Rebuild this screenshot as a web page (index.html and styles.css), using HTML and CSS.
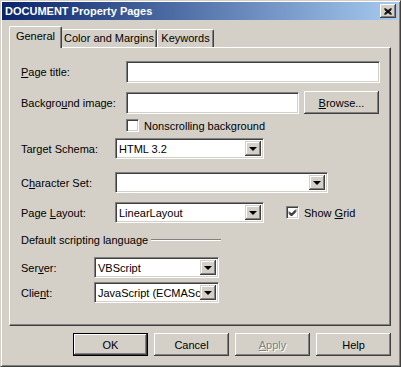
FILE: index.html
```html
<!DOCTYPE html>
<html lang="en">
<head>
    <meta charset="UTF-8">
    <title>DOCUMENT Property Pages</title>
    <link rel="stylesheet" href="styles.css">
</head>
<body>
    <div class="window">
        <!-- Title bar -->
        <div class="titlebar">
            <span class="title">DOCUMENT Property Pages</span>
            <span class="close-btn">
                <svg width="8" height="7" viewBox="0 0 8 7">
                    <path d="M0.5 0.5 L7.5 6.5 M1.5 0.5 L7.5 5.5 M0.5 1.5 L6.5 6.5 M7.5 0.5 L0.5 6.5 M6.5 0.5 L0.5 5.5 M7.5 1.5 L1.5 6.5" stroke="#000" stroke-width="1" fill="none"/>
                </svg>
            </span>
        </div>

        <div class="dialog">
            <div class="tabs">
                <div class="tab active tab-general">General</div>
                <div class="tab tab-color">Color and Margins</div>
                <div class="tab tab-keywords">Keywords</div>
            </div>

            <div class="panel">
                <div class="row row-pagetitle">
                    <label class="lbl lbl-a"><u>P</u>age title:</label>
                    <div class="edit w-title"></div>
                </div>

                <div class="row row-bgimage">
                    <label class="lbl lbl-a">Backgro<u>u</u>nd image:</label>
                    <div class="edit w-bg"></div>
                    <div class="btn btn-browse"><span><u>B</u>rowse...</span></div>
                </div>

                <div class="row row-check">
                    <span class="lbl lbl-a"></span>
                    <span class="checkbox"></span>
                    <span class="check-text">Nonscrolling back<u>g</u>round</span>
                </div>

                <div class="row row-schema">
                    <label class="lbl lbl-b">Tar<u>g</u>et Schema:</label>
                    <div class="select w-schema"><span class="value">HTML 3.2</span><span class="drop"><i></i></span></div>
                </div>

                <div class="row row-charset">
                    <label class="lbl lbl-b">C<u>h</u>aracter Set:</label>
                    <div class="select w-charset"><span class="value"></span><span class="drop"><i></i></span></div>
                </div>

                <div class="row row-layout">
                    <label class="lbl lbl-b">Page <u>L</u>ayout:</label>
                    <div class="select w-schema"><span class="value">LinearLayout</span><span class="drop"><i></i></span></div>
                    <span class="checkbox checked">
                        <svg width="9" height="9" viewBox="0 0 9 9">
                            <path d="M1 3.5 L3.5 6 L8 1.5 M1 4.5 L3.5 7 L8 2.5 M1 5.5 L3.5 8 L8 3.5" stroke="#000" stroke-width="1" fill="none"/>
                        </svg>
                    </span>
                    <span class="check-text">Show <u>G</u>rid</span>
                </div>

                <div class="group-label">
                    <span>Default scripting language</span>
                    <span class="etched"></span>
                </div>

                <div class="row row-server">
                    <label class="lbl lbl-c">Ser<u>v</u>er:</label>
                    <div class="select w-script"><span class="value">VBScript</span><span class="drop"><i></i></span></div>
                </div>

                <div class="row row-client">
                    <label class="lbl lbl-c">Clie<u>n</u>t:</label>
                    <div class="select w-script"><span class="value">JavaScript (ECMAScript)</span><span class="drop"><i></i></span></div>
                </div>
            </div>

            <div class="buttons">
                <div class="btn btn-default"><span>OK</span></div>
                <div class="btn"><span>Cancel</span></div>
                <div class="btn disabled"><span><u>A</u>pply</span></div>
                <div class="btn"><span>Help</span></div>
            </div>
        </div>
    </div>
</body>
</html>
```

FILE: styles.css
```css
* {
    margin: 0;
    padding: 0;
    box-sizing: border-box;
}

body {
    width: 401px;
    height: 367px;
    overflow: hidden;
    background: #d4d0c8;
    font-family: "Liberation Sans", Arial, sans-serif;
    font-size: 11px;
    color: #000;
}

u {
    text-decoration: underline;
    text-underline-offset: 1px;
}

.window {
    width: 401px;
    height: 367px;
    border: 1px solid;
    border-color: #d4d0c8 #404040 #404040 #d4d0c8;
    box-shadow: inset 1px 1px #fff, inset -1px -1px #808080;
    padding: 1px 2px 2px 1px;
    display: flex;
    flex-direction: column;
}

/* Title bar */
.titlebar {
    height: 18px;
    display: flex;
    align-items: center;
    justify-content: space-between;
    padding: 0 2px 0 3px;
    background: linear-gradient(to right, #0a246a, #a6caf0);
}

.title {
    color: #fff;
    font-weight: bold;
    font-size: 11px;
    white-space: nowrap;
}

.close-btn {
    width: 16px;
    height: 14px;
    display: flex;
    align-items: center;
    justify-content: center;
    background: #d4d0c8;
    box-shadow: inset -1px -1px #404040, inset 1px 1px #fff, inset -2px -2px #808080;
}

.close-btn svg {
    display: block;
}

/* Dialog body */
.dialog {
    flex: 1;
    display: flex;
    flex-direction: column;
    padding: 7px 7px 0 7px;
}

.tabs {
    height: 21px;
    display: flex;
    align-items: flex-end;
    margin-bottom: -1px;
    position: relative;
    z-index: 1;
}

.tab {
    height: 18px;
    line-height: 17px;
    text-align: center;
    white-space: nowrap;
    background: #d4d0c8;
    border-top: 1px solid #fff;
    border-left: 1px solid #fff;
    border-right: 1px solid #404040;
    box-shadow: inset -1px 0 #808080;
    border-radius: 2px 2px 0 0;
    margin-bottom: 1px;
}

.tab.active {
    height: 22px;
    line-height: 19px;
    margin-bottom: 0;
}

.tab-general {
    width: 53px;
}

.tab-color {
    width: 95px;
    border-left: none;
}

.tab-keywords {
    width: 57px;
}

.panel {
    height: 279px;
    border: 1px solid;
    border-color: #fff #404040 #404040 #fff;
    box-shadow: inset -1px -1px #808080;
    padding: 13px 0 0 11px;
}

.row {
    display: flex;
    align-items: center;
}

.lbl {
    flex: none;
    white-space: nowrap;
}

.lbl-a { width: 105px; }
.lbl-b { width: 94px; }
.lbl-c { width: 73px; }

.edit {
    height: 22px;
    background: #fff;
    border: 1px solid;
    border-color: #808080 #fff #fff #808080;
    box-shadow: inset 1px 1px #404040, inset -1px -1px #d4d0c8;
}

.w-title { width: 254px; }
.w-bg { width: 173px; }
.w-schema { width: 149px; }
.w-charset { width: 213px; }
.w-script { width: 125px; }

.row-bgimage { margin-top: 8px; }
.row-check { margin-top: 5px; height: 13px; }
.row-schema { margin-top: 6px; }
.row-charset { margin-top: 13px; }
.row-layout { margin-top: 9px; }
.row-server { margin-top: 11px; }
.row-client { margin-top: 4px; }

.btn {
    width: 75px;
    height: 23px;
    display: flex;
    align-items: center;
    justify-content: center;
    background: #d4d0c8;
    box-shadow: inset -1px -1px #404040, inset 1px 1px #fff, inset -2px -2px #808080;
    white-space: nowrap;
}

.btn-browse {
    margin-left: 5px;
}

.btn-default {
    border: 1px solid #000;
}

.btn.disabled {
    color: #808080;
    text-shadow: 1px 1px #fff;
}

.checkbox {
    width: 13px;
    height: 13px;
    flex: none;
    background: #fff;
    border: 1px solid;
    border-color: #808080 #fff #fff #808080;
    box-shadow: inset 1px 1px #404040, inset -1px -1px #d4d0c8;
    display: flex;
    align-items: center;
    justify-content: center;
}

.checkbox svg {
    display: block;
}

.check-text {
    margin-left: 5px;
    white-space: nowrap;
}

.row-layout .checkbox {
    margin-left: 22px;
}

.select {
    height: 21px;
    display: flex;
    align-items: center;
    background: #fff;
    border: 1px solid;
    border-color: #808080 #fff #fff #808080;
    box-shadow: inset 1px 1px #404040, inset -1px -1px #d4d0c8;
    padding: 2px 2px 2px 3px;
    overflow: hidden;
}

.select .value {
    flex: 1;
    white-space: nowrap;
    overflow: hidden;
}

.drop {
    width: 16px;
    height: 100%;
    flex: none;
    background: #d4d0c8;
    box-shadow: inset -1px -1px #404040, inset 1px 1px #d4d0c8, inset -2px -2px #808080, inset 2px 2px #fff;
    display: flex;
    align-items: center;
    justify-content: center;
}

.drop i {
    width: 0;
    height: 0;
    border-left: 4px solid transparent;
    border-right: 4px solid transparent;
    border-top: 4px solid #000;
}

.group-label {
    display: flex;
    align-items: center;
    margin-top: 10px;
    height: 13px;
}

.etched {
    width: 70px;
    margin-left: 3px;
    border-top: 1px solid #808080;
    border-bottom: 1px solid #fff;
}

.buttons {
    display: flex;
    justify-content: flex-end;
    gap: 6px;
    margin-top: 7px;
}
```
